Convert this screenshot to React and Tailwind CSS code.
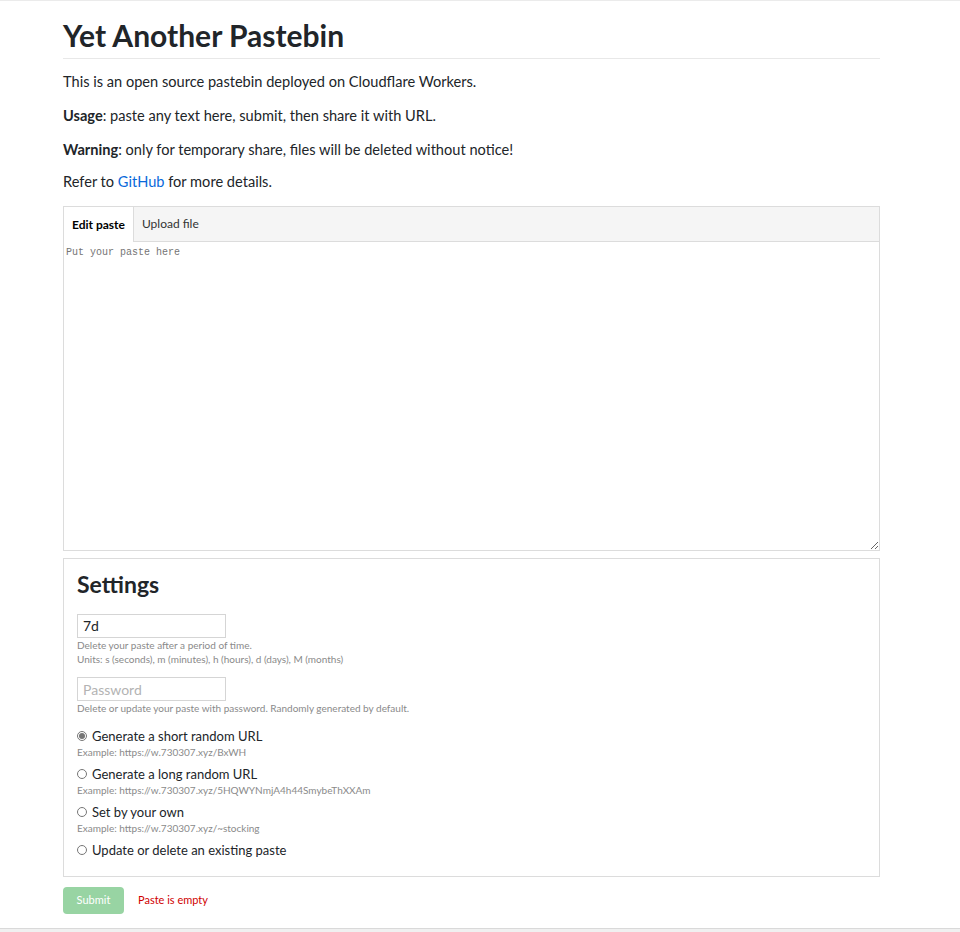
import { useState } from 'react';

const FONT = { fontFamily: 'Lato, "Noto Sans", sans-serif' };

const urlOptions = [
    { id: 'short', label: 'Generate a short random URL', example: 'Example: https://w.730307.xyz/BxWH' },
    { id: 'long', label: 'Generate a long random URL', example: 'Example: https://w.730307.xyz/5HQWYNmjA4h44SmybeThXXAm' },
    { id: 'custom', label: 'Set by your own', example: 'Example: https://w.730307.xyz/~stocking' },
    { id: 'admin', label: 'Update or delete an existing paste', example: null },
];

export default function App() {
    const [tab, setTab] = useState('edit');
    const [expiration, setExpiration] = useState('7d');
    const [password, setPassword] = useState('');
    const [urlType, setUrlType] = useState('short');
    const [paste, setPaste] = useState('');

    return (
        <div className="min-h-[932px] bg-white text-[#212529] border-t border-[#ebebeb] flex flex-col" style={FONT}>
            <main className="flex-grow mx-[63px] w-[817px]">
                <h1 className="mt-[14px] pb-[3px] text-[30px] leading-[40px] font-bold border-b border-[#e8e8e8]">Yet Another Pastebin</h1>

                <p className="mt-[12px] text-[14.6px] leading-[22px]">This is an open source pastebin deployed on Cloudflare Workers.</p>
                <p className="mt-[12px] text-[14.6px] leading-[22px]"><b>Usage</b>: paste any text here, submit, then share it with URL.</p>
                <p className="mt-[12px] text-[14.6px] leading-[22px]"><b>Warning</b>: only for temporary share, files will be deleted without notice!</p>
                <p className="mt-[10px] text-[14.6px] leading-[22px]">Refer to <a href="#" className="text-[#0969da]">GitHub</a> for more details.</p>

                {/* editor */}
                <div className="mt-[13px] border border-[#dcdcdc]">
                    <div className="flex bg-[#f5f5f5] border-b border-[#dcdcdc] h-[35px]">
                        <button onClick={() => setTab('edit')} className={`px-[8px] text-[12px] border-r border-[#dcdcdc] ${tab === 'edit' ? 'bg-white font-bold text-black h-[35px] -mb-px' : 'text-[#333]'}`}>Edit paste</button>
                        <button onClick={() => setTab('file')} className={`px-[8px] text-[12px] ${tab === 'file' ? 'bg-white font-bold text-black' : 'text-[#333]'}`}>Upload file</button>
                    </div>
                    <textarea
                        value={paste}
                        onChange={(e) => setPaste(e.target.value)}
                        placeholder="Put your paste here"
                        className="block w-full h-[308px] px-[2px] py-[4px] text-[10px] leading-[13px] outline-none placeholder:text-[#757575]"
                        style={{ fontFamily: '"Liberation Mono", "DejaVu Sans Mono", monospace' }}
                    />
                </div>

                {/* settings */}
                <div className="mt-[7px] border border-[#dcdcdc] px-[13px] pt-[10px] pb-[17px]">
                    <h2 className="text-[23px] leading-[30px] font-bold">Settings</h2>

                    <div className="mt-[14px]">
                        <input value={expiration} onChange={(e) => setExpiration(e.target.value)} className="w-[149px] h-[24px] border border-[#d5d5d5] px-[5px] text-[14px] outline-none" />
                        <p className="text-[10px] leading-[14px] text-[#8a8a8a]">Delete your paste after a period of time.</p>
                        <p className="text-[10px] leading-[14px] text-[#8a8a8a]">Units: s (seconds), m (minutes), h (hours), d (days), M (months)</p>
                    </div>

                    <div className="mt-[11px]">
                        <input value={password} onChange={(e) => setPassword(e.target.value)} placeholder="Password" className="w-[149px] h-[24px] border border-[#d5d5d5] px-[5px] text-[14px] outline-none placeholder:text-[#b3b3b3]" />
                        <p className="text-[10px] leading-[14px] text-[#8a8a8a]">Delete or update your paste with password. Randomly generated by default.</p>
                    </div>

                    <div className="mt-[12px] flex flex-col gap-[6px]">
                        {urlOptions.map((opt) => (
                            <div key={opt.id}>
                                <label className="flex items-center gap-[5px] text-[13px] leading-[18px] text-[#212529]">
                                    <input type="radio" name="url" checked={urlType === opt.id} onChange={() => setUrlType(opt.id)} className="m-0 w-[10px] h-[10px] accent-[#767676]" />
                                    {opt.label}
                                </label>
                                {opt.example && <p className="text-[10px] leading-[14px] text-[#8a8a8a]">{opt.example}</p>}
                            </div>
                        ))}
                    </div>
                </div>

                <div className="mt-[10px] flex items-center gap-[14px]">
                    <button disabled className="w-[61px] h-[27px] rounded-[4px] bg-[#98d4a3] text-white text-[11px]">Submit</button>
                    <span className="text-[11px] text-[#d00000]">Paste is empty</span>
                </div>
            </main>
            <div className="h-[4px] mt-[12px] border-t border-[#d9d9d9] bg-[#f0f0f0]"></div>
        </div>
    );
}
